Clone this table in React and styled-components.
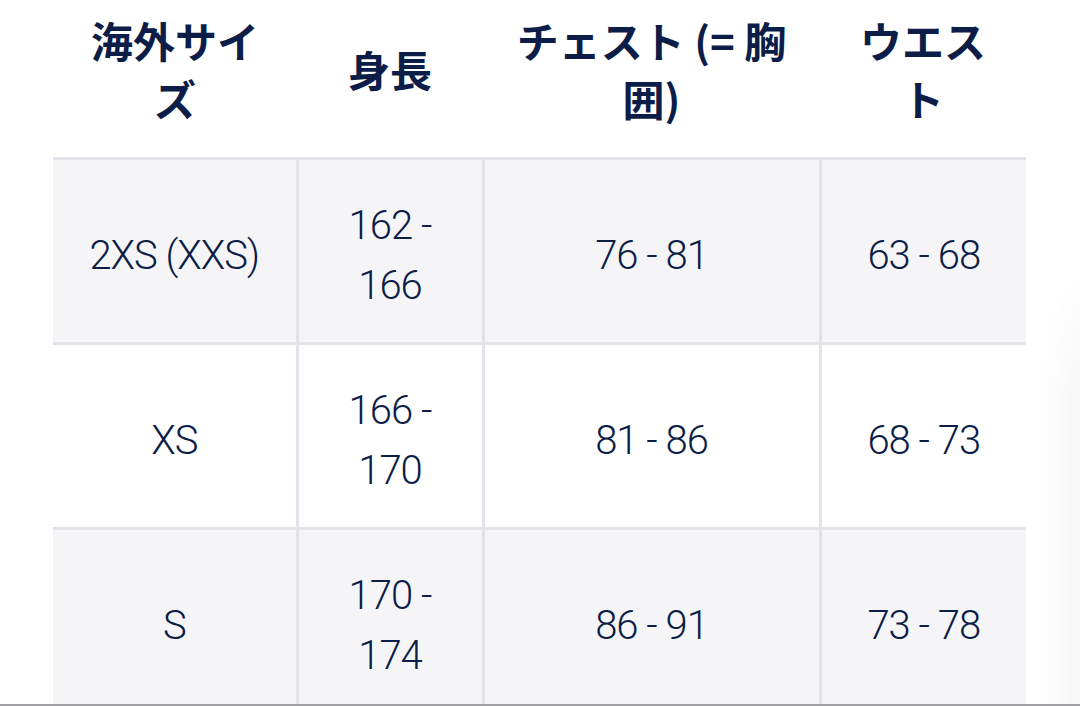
import styled, { createGlobalStyle } from 'styled-components';

const GlobalStyle = createGlobalStyle`
  html, body {
    margin: 0;
    padding: 0;
    background: #ffffff;
  }
  body {
    font-family: Roboto, "Noto Sans CJK JP", sans-serif;
    overflow: hidden;
  }
`

const Page = styled.div`
  position: relative;
  width: 1080px;
  height: 706px;
  box-sizing: border-box;
  border-bottom: 2px solid #a3a3a6;
  overflow: hidden;
  background: #ffffff;
`

const EdgeShade = styled.div`
  position: absolute;
  right: 0;
  top: 260px;
  bottom: 0;
  width: 46px;
  background: linear-gradient(to right, rgba(0, 0, 0, 0), rgba(0, 0, 0, 0.03));
  -webkit-mask-image: linear-gradient(to bottom, transparent, #000 140px);
  mask-image: linear-gradient(to bottom, transparent, #000 140px);
`

const Table = styled.table`
  margin-left: 53px;
  width: 973px;
  table-layout: fixed;
  border-collapse: collapse;
  color: #0c1d48;
`

const HeadCell = styled.th`
  height: 158px;
  padding: 4px 24px 22px;
  box-sizing: border-box;
  font-family: "Noto Sans CJK JP", sans-serif;
  font-size: 42px;
  font-weight: 700;
  line-height: 58px;
  text-align: center;
  vertical-align: middle;
  border-bottom: 3px solid #e3e4e9;
`

const Row = styled.tr`
  background: ${p => (p.$shaded ? '#f5f5f7' : '#ffffff')};
  border-bottom: 3px solid #e3e4e9;
`

const Cell = styled.td`
  height: 185px;
  padding: 10px 24px 0;
  box-sizing: border-box;
  font-family: Roboto, sans-serif;
  font-size: 40px;
  font-weight: 300;
  letter-spacing: -1px;
  line-height: 60px;
  text-align: center;
  vertical-align: middle;
  border-right: ${p => (p.$last ? 'none' : '3px solid #e3e4e9')};
`

const widths = [244, 186, 337, 206]

const headers = ['海外サイズ', '身長', 'チェスト (= 胸囲)', 'ウエスト']

const rows = [
  ['2XS (XXS)', '162 - 166', '76 - 81', '63 - 68'],
  ['XS', '166 - 170', '81 - 86', '68 - 73'],
  ['S', '170 - 174', '86 - 91', '73 - 78'],
]

const App = () => {
  return (
    <Page>
      <GlobalStyle />
      <Table>
        <colgroup>
          {widths.map((w, i) => (
            <col key={i} style={{ width: w }} />
          ))}
        </colgroup>
        <thead>
          <tr>
            {headers.map(h => (
              <HeadCell key={h}>{h}</HeadCell>
            ))}
          </tr>
        </thead>
        <tbody>
          {rows.map((r, i) => (
            <Row key={r[0]} $shaded={i % 2 === 0}>
              {r.map((v, j) => (
                <Cell key={j} $last={j === r.length - 1}>{v}</Cell>
              ))}
            </Row>
          ))}
        </tbody>
      </Table>
      <EdgeShade />
    </Page>
  )
}

export default App
